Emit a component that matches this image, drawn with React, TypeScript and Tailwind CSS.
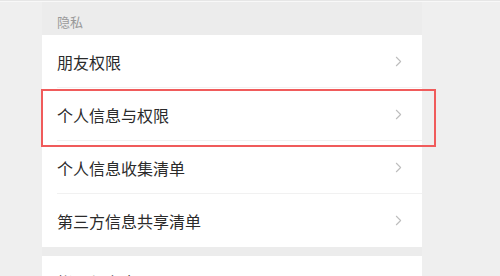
import { ChevronRight } from 'lucide-react';

const ROWS = ['朋友权限', '个人信息与权限', '个人信息收集清单', '第三方信息共享清单'];

const FONT = { fontFamily: '"Noto Sans CJK SC", "Noto Sans", sans-serif' };

function Row({ label, last }: { label: string; last?: boolean }) {
  return (
    <div className="relative flex h-[53px] items-center justify-between bg-white pl-[15px] pr-[15px]">
      <span className="text-[16px] leading-none text-[#2b2b2b]">{label}</span>
      <ChevronRight size={17} strokeWidth={1.5} className="text-[#bdbdbd]" />
      {!last && <div className="absolute bottom-0 left-[15px] right-0 h-px bg-[#f1f1f1]" />}
    </div>
  );
}

export default function App() {
  return (
    <div className="relative h-[276px] w-[500px] overflow-hidden bg-[#efefef]" style={FONT}>
      <div className="h-[2px] border-t border-[#e6e6e6] bg-[#f8f8f8]" />
      <div className="ml-[42px] w-[380px]">
        <div className="flex h-[33px] items-center bg-[#ececec] pl-[15px] pt-[6px]">
          <span className="text-[13px] leading-none text-[#9a9a9a]">隐私</span>
        </div>
        {ROWS.map((r, i) => (
          <Row key={r} label={r} last={i === ROWS.length - 1} />
        ))}
        <div className="h-[9px] bg-[#ececec]" />
        <div className="flex h-[40px] items-start bg-white pl-[15px] pt-[18px]">
          <span className="text-[16px] leading-none text-[#2b2b2b]">帐号与安全</span>
        </div>
      </div>
      <div className="pointer-events-none absolute left-[41px] top-[89px] h-[58px] w-[395px] border-2 border-[#f05b5b]" />
    </div>
  );
}
